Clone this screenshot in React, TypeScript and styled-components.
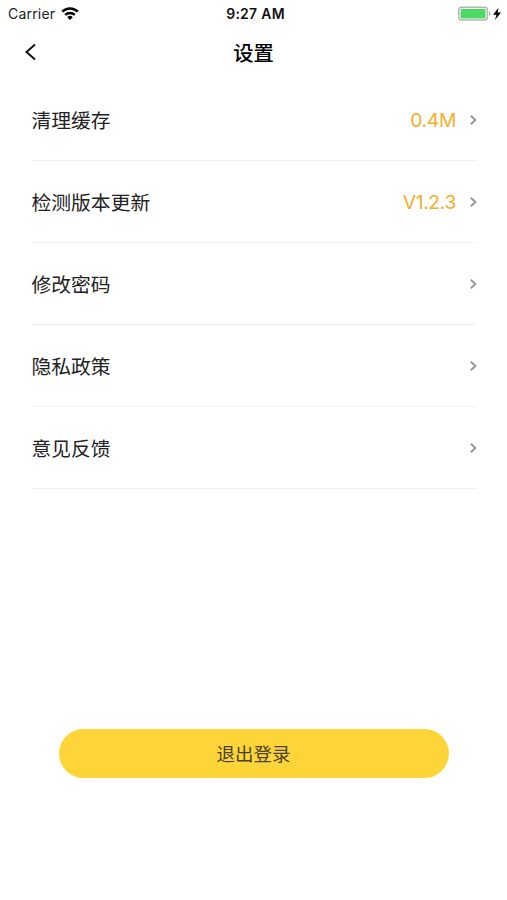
import React from "react";
import styled, { createGlobalStyle } from "styled-components";

const Global = createGlobalStyle`
  * { box-sizing: border-box; }
  body { margin: 0; background: #fff; font-family: Inter, "Noto Sans CJK SC", sans-serif; color: #222; }
`;
const Screen = styled.main`
  width: 100%; height: 900px; display: flex; flex-direction: column; background: #fff; overflow: hidden;
`;
const StatusBar = styled.header`
  height: 27px; flex: none; display: grid; grid-template-columns: 1fr auto 1fr; align-items: center;
  padding: 0 5px 0 8px; font-size: 14px; color: #222;
`;
const Carrier = styled.div`display: flex; align-items: center; gap: 6px; letter-spacing: 0.2px;`;
const Clock = styled.div`font-weight: 600; letter-spacing: 0.26px; color: #111; padding-left: 1px;`;
const Power = styled.div`display: flex; justify-content: flex-end;`;
const NavBar = styled.nav`
  height: 52px; flex: none; display: grid; grid-template-columns: 1fr auto 1fr; align-items: center; padding: 0 24px;
`;
const BackButton = styled.button`
  border: 0; background: none; padding: 0; margin-bottom: 2px; width: 13px; height: 18px; display: flex;
`;
const Title = styled.h1`margin: 0; padding-top: 1px; font-size: 20.3px; line-height: 30px; font-weight: 500; color: #000;`;
const List = styled.section`display: flex; flex-direction: column; padding: 0 30px 0 31.5px;`;
const Row = styled.div`
  height: 82px; display: flex; align-items: center; border-bottom: 1px solid #f1f1f1; font-size: 19.8px;
`;
const Label = styled.span`flex: 1;`;
const Value = styled.span`
  color: #f5ae2b; font-size: 19.3px; letter-spacing: -0.35px; margin-right: 13px; padding-top: 1px;
`;
const Logout = styled.button`
  margin: 240px 58px 0 59px; height: 49px; flex: none; border: 0; border-radius: 25px; background: #fed539;
  color: #4a4222; font: 400 18.5px Inter, "Noto Sans CJK SC", sans-serif; padding: 0 1px 2px 0;
`;

const rows = [
  { label: "清理缓存", value: "0.4M" },
  { label: "检测版本更新", value: "V1.2.3" },
  { label: "修改密码" },
  { label: "隐私政策" },
  { label: "意见反馈" },
];

const Wifi = () => (
  <svg width="18" height="13" viewBox="0 0 18 13" fill="none" stroke="#000" strokeWidth="2.5">
    <path d="M1.2 4.7a11 11 0 0 1 15.6 0M4.2 7.9a6.8 6.8 0 0 1 9.6 0" />
    <path d="M6.3 10.2a3.8 3.8 0 0 1 5.4 0L9 12.9Z" fill="#000" stroke="none" />
  </svg>
);
const Battery = () => (
  <svg width="44" height="16" viewBox="0 0 44 16">
    <rect x="0.8" y="1.3" width="28.6" height="12.8" rx="3" fill="none" stroke="#b5b5b5" strokeWidth="1.5" />
    <rect x="2.6" y="3" width="25" height="9.5" rx="1" fill="#4cd964" />
    <path d="M31 5.3q3 2.5 0 5Z" fill="#aaa" />
    <path d="M40.5 1.8 35 8.8h3.4L37 14l6-7.4h-3.4Z" fill="#000" />
  </svg>
);
const Chevron = () => (
  <svg width="8" height="12" viewBox="0 0 8 12" fill="none" stroke="#999" strokeWidth="2">
    <path d="m1.8 1.8 4.5 4.2-4.5 4.2" />
  </svg>
);

export default function App() {
  return (
    <Screen>
      <Global />
      <StatusBar>
        <Carrier>Carrier <Wifi /></Carrier>
        <Clock>9:27 AM</Clock>
        <Power><Battery /></Power>
      </StatusBar>
      <NavBar>
        <BackButton aria-label="返回">
          <svg width="13" height="18" viewBox="0 0 13 18" fill="none" stroke="#111" strokeWidth="2">
            <path d="M11 1.5 2.5 9l8.5 7.5" />
          </svg>
        </BackButton>
        <Title>设置</Title>
      </NavBar>
      <List>
        {rows.map((r) => (
          <Row key={r.label}>
            <Label>{r.label}</Label>
            {r.value && <Value>{r.value}</Value>}
            <Chevron />
          </Row>
        ))}
      </List>
      <Logout>退出登录</Logout>
    </Screen>
  );
}
